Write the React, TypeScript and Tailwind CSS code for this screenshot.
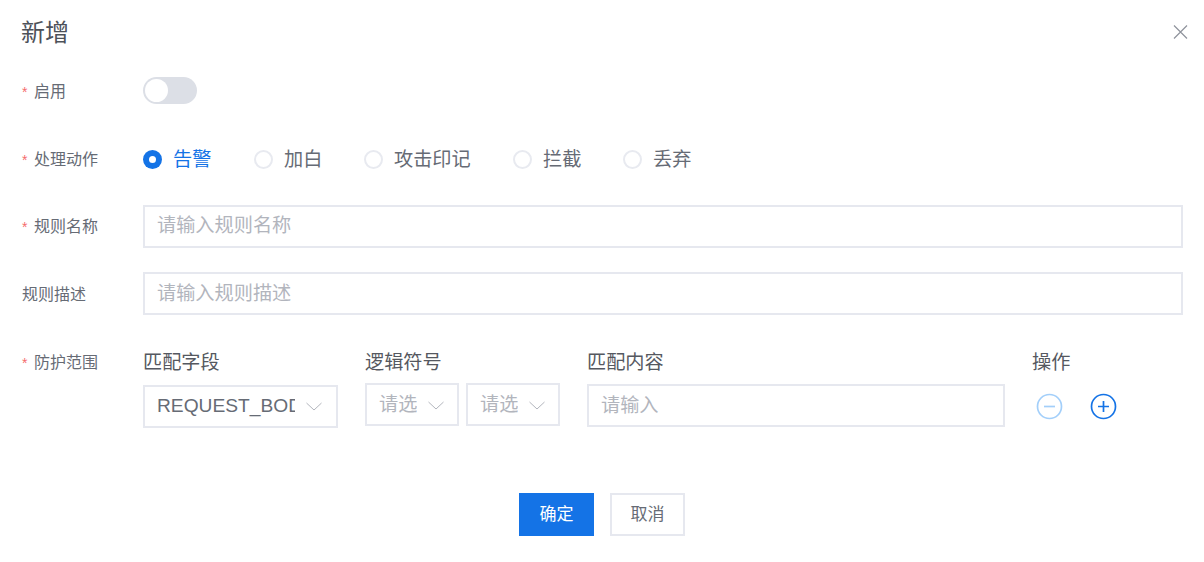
const FONT = "font-['Liberation_Sans','Noto_Sans_CJK_SC',sans-serif]"

const ACTIONS = [
  { label: '告警', width: 'w-[111px]', checked: true },
  { label: '加白', width: 'w-[110px]', checked: false },
  { label: '攻击印记', width: 'w-[149px]', checked: false },
  { label: '拦截', width: 'w-[110px]', checked: false },
  { label: '丢弃', width: 'w-[80px]', checked: false },
]

function FormLabel({ text, required = true, nudge = false }: { text: string; required?: boolean; nudge?: boolean }) {
  return (
    <div className={`w-[121px] shrink-0 flex items-center text-[16px] leading-[22px] text-[#666b75] ${nudge ? 'pt-[2px]' : ''}`}>
      {required && <span className="w-[12px] text-[14px] text-[#f56c6c]">*</span>}
      <span>{text}</span>
    </div>
  )
}

function Radio({ label, width, checked }: { label: string; width: string; checked: boolean }) {
  return (
    <label className={`${width} flex items-center gap-[11px] text-[19.2px] leading-[22px] ${checked ? 'text-[#1473e6]' : 'text-[#666b75]'}`}>
      {checked ? (
        <span className="w-[19px] h-[19px] rounded-full bg-[#1473e6] flex items-center justify-center">
          <span className="w-[7px] h-[7px] rounded-full bg-white" />
        </span>
      ) : (
        <span className="w-[19px] h-[19px] rounded-full border-2 border-[#e8eaf0] bg-white" />
      )}
      <span className="pt-[2px]">{label}</span>
    </label>
  )
}

function TextInput({ placeholder, nudge = false }: { placeholder: string; nudge?: boolean }) {
  return (
    <div className={`h-[43px] border-2 border-[#e6e8ef] px-[12px] flex items-center text-[19.2px] text-[#b2b5bd] bg-white ${nudge ? 'pt-[2px]' : ''}`}>
      {placeholder}
    </div>
  )
}

function Chevron() {
  return (
    <svg className="ml-[11px] shrink-0" width="16" height="9" viewBox="0 0 16 9" fill="none" stroke="#b2b5bd" strokeWidth="1">
      <path d="M0.5 1 8 8l7.5-7" />
    </svg>
  )
}

function Select({ text, width, textWidth, muted = false }: { text: string; width: string; textWidth: string; muted?: boolean }) {
  return (
    <div className={`${width} h-[43px] border-2 border-[#e6e8ef] pl-[12px] flex items-center bg-white text-[19.2px] ${muted ? 'text-[#b2b5bd] pt-[2px]' : 'text-[#666b75]'}`}>
      <span className={`${textWidth} shrink-0 overflow-hidden whitespace-nowrap`}>{text}</span>
      <Chevron />
    </div>
  )
}

export default function App() {
  return (
    <div className={`${FONT} relative w-[1204px] h-[562px] bg-white pl-[22px] pr-[21px] overflow-hidden`}>
      <button className="absolute top-[25px] left-[1173px]" aria-label="关闭">
        <svg className="block" width="15" height="14" viewBox="0 0 15 14" fill="none" stroke="#8f939c" strokeWidth="1.2">
          <path d="M1 0.5 14 13.5M14 0.5 1 13.5" />
        </svg>
      </button>

      <h2 className="pt-[17px] -ml-px text-[24px] leading-[32px] text-[#4d5159]">新增</h2>

      {/* 启用 */}
      <div className="mt-[28px] flex items-center h-[27px]">
        <FormLabel text="启用" nudge />
        <div className="w-[54px] h-[27px] rounded-full bg-[#dcdfe6] p-[2px]">
          <div className="w-[23px] h-[23px] rounded-full bg-white" />
        </div>
      </div>

      {/* 处理动作 */}
      <div className="mt-[41px] flex items-center h-[28px]">
        <FormLabel text="处理动作" nudge />
        <div className="flex items-center">
          {ACTIONS.map((a) => (
            <Radio key={a.label} {...a} />
          ))}
        </div>
      </div>

      <div className="mt-[32px] flex items-center">
        <FormLabel text="规则名称" />
        <div className="flex-1">
          <TextInput placeholder="请输入规则名称" />
        </div>
      </div>

      <div className="mt-[24px] flex items-center">
        <FormLabel text="规则描述" required={false} nudge />
        <div className="flex-1">
          <TextInput placeholder="请输入规则描述" nudge />
        </div>
      </div>

      {/* 防护范围 */}
      <div className="mt-[33px] flex items-start">
        <div className="mt-[2px]">
          <FormLabel text="防护范围" nudge />
        </div>
        <div className="flex items-start">
          <div className="w-[222px] shrink-0">
            <div className="text-[19.2px] leading-[30px] text-[#555860]">匹配字段</div>
            <div className="mt-[7px]">
              <Select text="REQUEST_BODY" width="w-[195px]" textWidth="w-[138px]" />
            </div>
          </div>
          <div className="w-[222px] shrink-0">
            <div className="text-[19.2px] leading-[30px] text-[#555860]">逻辑符号</div>
            <div className="mt-[5px] flex gap-[7px]">
              <Select text="请选" width="w-[94px]" textWidth="w-[38px]" muted />
              <Select text="请选" width="w-[94px]" textWidth="w-[38px]" muted />
            </div>
          </div>
          <div className="w-[445px] shrink-0">
            <div className="text-[19.2px] leading-[30px] text-[#555860]">匹配内容</div>
            <div className="mt-[6px] w-[418px]">
              <TextInput placeholder="请输入" nudge />
            </div>
          </div>
          <div className="shrink-0">
            <div className="text-[19.2px] leading-[30px] text-[#555860]">操作</div>
            <div className="mt-[7px] pl-[4px] h-[43px] flex items-center gap-[27px]">
              <svg width="27" height="27" viewBox="0 0 27 27" fill="none" stroke="#a3cffa" strokeWidth="1.7">
                <circle cx="13.5" cy="13.5" r="12" />
                <path d="M8 13.5h11" />
              </svg>
              <svg width="27" height="27" viewBox="0 0 27 27" fill="none" stroke="#1473e6" strokeWidth="1.7">
                <circle cx="13.5" cy="13.5" r="12" />
                <path d="M8 13.5h11M13.5 8v11" />
              </svg>
            </div>
          </div>
        </div>
      </div>

      {/* 底部按钮 */}
      <div className="mt-[65px] flex justify-center gap-[16px] pr-[1px]">
        <button className="w-[75px] h-[43px] bg-[#1473e6] text-white text-[17px]">确定</button>
        <button className="w-[75px] h-[43px] border-2 border-[#e6e8ef] bg-white text-[#666b75] text-[17px]">取消</button>
      </div>
    </div>
  )
}
